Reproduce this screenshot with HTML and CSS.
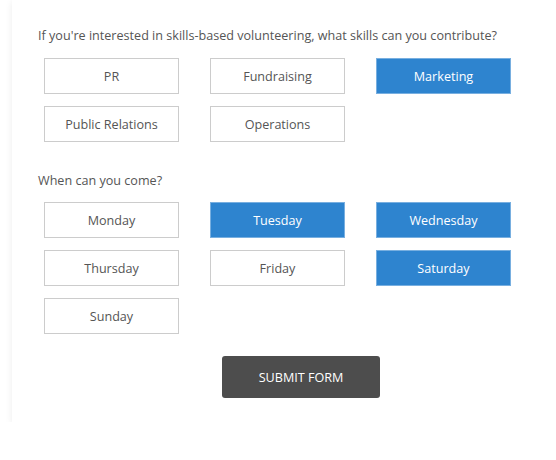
FILE: index.html
```html
<!DOCTYPE html>
<html lang="en">
<head>
  <meta charset="UTF-8">
  <title>Volunteer Form</title>
  <link rel="stylesheet" href="styles.css">
</head>
<body>
  <div class="card">
    <form class="form">
      <p class="question">If you're interested in skills-based volunteering, what skills can you contribute?</p>
      <div class="options">
        <button type="button" class="option">PR</button>
        <button type="button" class="option">Fundraising</button>
        <button type="button" class="option selected">Marketing</button>
        <button type="button" class="option">Public Relations</button>
        <button type="button" class="option">Operations</button>
      </div>

      <p class="question second">When can you come?</p>
      <div class="options">
        <button type="button" class="option">Monday</button>
        <button type="button" class="option selected">Tuesday</button>
        <button type="button" class="option selected">Wednesday</button>
        <button type="button" class="option">Thursday</button>
        <button type="button" class="option">Friday</button>
        <button type="button" class="option selected">Saturday</button>
        <button type="button" class="option">Sunday</button>
      </div>

      <div class="submit-row">
        <button type="submit" class="submit">SUBMIT FORM</button>
      </div>
    </form>
  </div>
</body>
</html>
```

FILE: styles.css
```css
body {
  margin: 0;
  background: #fff;
  font-family: "Open Sans", Arial, sans-serif;
  overflow: hidden;
}
.card {
  margin-left: 12px;
  background: #fff;
  box-shadow: 0 2px 7px rgba(0, 0, 0, 0.08);
  padding: 26px 0 24px 26px;
}
.question {
  margin: 0;
  font-size: 12.6px;
  line-height: 20px;
  color: #555;
}
.question.second {
  margin-top: 29px;
}
.options {
  display: grid;
  grid-template-columns: repeat(3, 135px);
  column-gap: 31px;
  row-gap: 12px;
  margin: 12px 0 0 6px;
}
.question.second + .options {
  margin-top: 11px;
}
.option {
  height: 36px;
  box-sizing: border-box;
  border: 1px solid #ccc;
  background: #fff;
  color: #555;
  font-family: inherit;
  font-size: 12.6px;
  padding: 0;
  cursor: pointer;
}
.option.selected {
  background: #2e84cf;
  border-color: #78afe0;
  color: #fff;
}
.submit-row {
  margin-top: 22px;
  padding-left: 184px;
}
.submit {
  width: 158px;
  height: 42px;
  border: none;
  border-radius: 3px;
  background: #4d4d4d;
  color: #fff;
  font-family: inherit;
  font-size: 12.6px;
  cursor: pointer;
}
```
